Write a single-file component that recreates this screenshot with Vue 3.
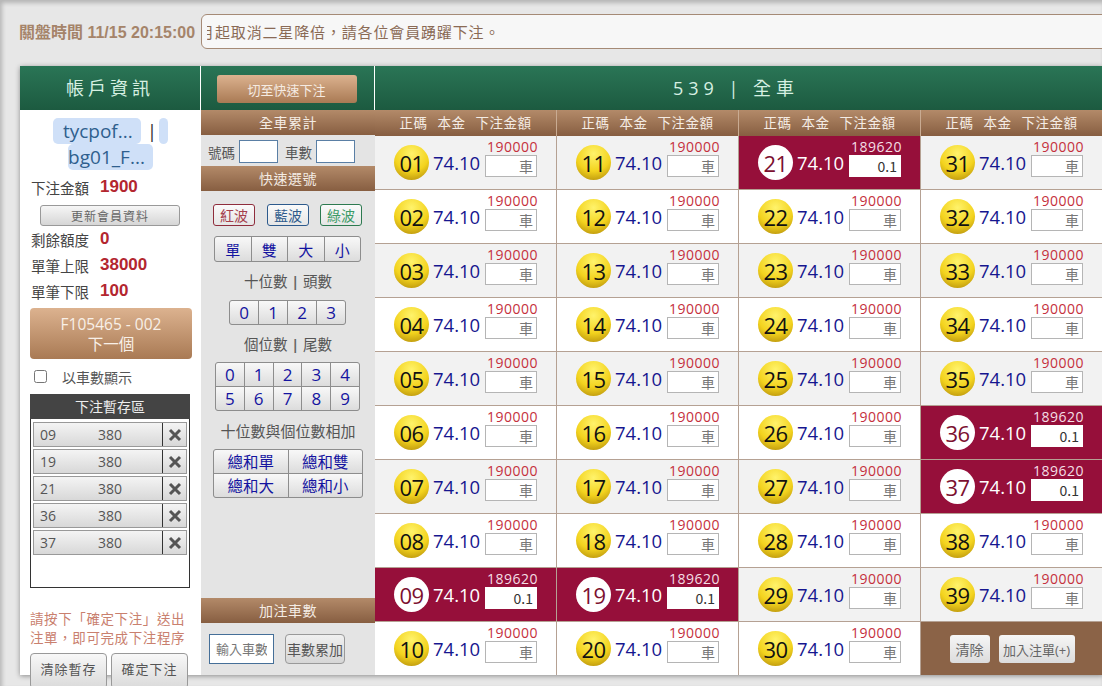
<template>
  <div class="page">
    <div class="top-bar">
      <span class="close-time">關盤時間 11/15 20:15:00</span>
      <div class="notice">
        <div class="notice-clip"><span class="notice-text">月起取消二星降倍，請各位會員踴躍下注。</span></div>
      </div>
    </div>

    <div class="board">
      <aside class="account">
        <h2 class="green-head account-title">帳戶資訊</h2>
        <div class="user">
          <span class="chip">tycpof...</span><span class="bar">|</span><span class="chip chip-empty"></span>
          <span class="chip chip-second">bg01_F...</span>
        </div>
        <p class="stat first"><span>下注金額</span><b>1900</b></p>
        <button class="refresh-btn">更新會員資料</button>
        <p class="stat refresh-after"><span>剩餘額度</span><b>0</b></p>
        <p class="stat"><span>單筆上限</span><b>38000</b></p>
        <p class="stat"><span>單筆下限</span><b>100</b></p>
        <button class="next-btn">F105465 - 002<br />下一個</button>
        <label class="by-count"><input type="checkbox" /><span>以車數顯示</span></label>
        <div class="cart">
          <div class="cart-head">下注暫存區</div>
          <div class="cart-body">
            <div v-for="item in cart" :key="item" class="cart-row">
              <span class="cart-no">{{ item }}</span>
              <span class="cart-amt">380</span>
              <span class="cart-del">
                <svg width="14" height="14" viewBox="0 0 14 14">
                  <path d="M2 2 L12 12 M12 2 L2 12" stroke="#555" stroke-width="3" fill="none" />
                </svg>
              </span>
            </div>
          </div>
        </div>
        <p class="hint">請按下「確定下注」送出<br />注單，即可完成下注程序</p>
        <div class="cart-actions">
          <button>清除暫存</button>
          <button>確定下注</button>
        </div>
      </aside>

      <section class="quick">
        <div class="green-head quick-top"><button class="switch-btn">切至快速下注</button></div>
        <div class="brown-head">全車累計</div>
        <div class="totals">
          <span>號碼</span><input class="small-input" />
          <span class="totals-second">車數</span><input class="small-input" />
        </div>
        <div class="brown-head">快速選號</div>
        <div class="waves">
          <button class="wave red">紅波</button>
          <button class="wave blue">藍波</button>
          <button class="wave green">綠波</button>
        </div>
        <div class="btn-group group-four">
          <button v-for="t in ['單', '雙', '大', '小']" :key="t">{{ t }}</button>
        </div>
        <p class="quick-label">十位數 <i>|</i> 頭數</p>
        <div class="btn-group group-tens">
          <button v-for="t in [0, 1, 2, 3]" :key="t">{{ t }}</button>
        </div>
        <p class="quick-label">個位數 <i>|</i> 尾數</p>
        <div class="btn-group group-units">
          <button v-for="t in 10" :key="t">{{ t - 1 }}</button>
        </div>
        <p class="quick-label sum-label">十位數與個位數相加</p>
        <div class="btn-group group-sum">
          <button v-for="t in ['總和單', '總和雙', '總和大', '總和小']" :key="t">{{ t }}</button>
        </div>
        <div class="brown-head add-head">加注車數</div>
        <div class="add-row">
          <input class="add-input" placeholder="輸入車數" />
          <button class="add-btn">車數累加</button>
        </div>
      </section>

      <section class="numbers">
        <h2 class="green-head numbers-title">539 | 全車</h2>
        <div class="col-heads">
          <div v-for="c in 4" :key="c" class="col-head">
            <span>正碼</span><span>本金</span><span>下注金額</span>
          </div>
        </div>
        <div class="grid">
          <div
            v-for="cell in cells"
            :key="cell.no"
            :class="['cell', { alt: cell.alt, picked: cell.picked }]"
          >
            <span class="ball">{{ cell.no }}</span>
            <span class="rate">74.10</span>
            <div class="stake">
              <span class="limit">{{ cell.picked ? 189620 : 190000 }}</span>
              <input class="stake-input" placeholder="車" :value="cell.picked ? '0.1' : ''" />
            </div>
          </div>
          <div class="cell-actions">
            <button>清除</button>
            <button>加入注單(+)</button>
          </div>
        </div>
      </section>
    </div>
  </div>
</template>

<script setup>
const cart = ['09', '19', '21', '36', '37']
const pickedNumbers = ['09', '19', '21', '36', '37']

const cells = []
for (let i = 1; i <= 39; i++) {
  const no = String(i).padStart(2, '0')
  cells.push({
    no,
    alt: (i - 1) % 10 % 2 === 0,
    picked: pickedNumbers.includes(no)
  })
}
</script>

<style>
html,
body {
  margin: 0;
  overflow: hidden;
}
</style>

<style scoped>
.page {
  width: 1102px;
  height: 686px;
  box-sizing: border-box;
  padding: 14px 0 0 20px;
  overflow: hidden;
  background: #e7e7e7;
  box-shadow: inset 2px 3px 4px rgba(0, 0, 0, 0.22);
  font-family: "Open Sans", "Noto Sans CJK TC", sans-serif;
  color: #444;
}

button {
  font-family: inherit;
  padding: 0;
  cursor: pointer;
}

p,
h2 {
  margin: 0;
  font-weight: normal;
}

.top-bar {
  display: flex;
  align-items: center;
  gap: 6px;
  height: 35px;
}

.close-time {
  margin: -2px 0 0 -1px;
  font-family: "Liberation Sans", "Noto Sans CJK TC", sans-serif;
  font-size: 16px;
  font-weight: bold;
  color: #a5846a;
  white-space: nowrap;
}

.notice {
  flex: 1;
  height: 33px;
  margin-right: -12px;
  padding-left: 5px;
  display: flex;
  align-items: center;
  overflow: hidden;
  background: #f7f7f7;
  border: 1px solid #a58a76;
  border-radius: 6px;
}

.notice-clip {
  flex: 1;
  overflow: hidden;
  white-space: nowrap;
}

.notice-text {
  display: inline-block;
  margin-left: -8px;
  margin-top: -2px;
  font-size: 15px;
  letter-spacing: 0.85px;
  color: #8a6a55;
}

.board {
  display: flex;
  width: 1083px;
  height: 609px;
  margin-top: 17px;
  background: #fff;
  box-shadow: 0 1px 5px rgba(0, 0, 0, 0.4);
}

.green-head {
  height: 44px;
  box-sizing: border-box;
  display: flex;
  align-items: center;
  justify-content: center;
  background: linear-gradient(#2a7556, #1c5a40);
  color: #d6f0e2;
}

.account {
  width: 181px;
  flex-shrink: 0;
  background: #fff;
  font-size: 14.5px;
}

.account-title {
  padding-bottom: 3px;
  border-right: 1px solid #fff;
  font-size: 18px;
  letter-spacing: 4px;
}

.user {
  width: 140px;
  margin: 8px auto 0;
  text-align: center;
  font-size: 19px;
  line-height: 26px;
  color: #2f5f8e;
}

.chip {
  display: inline-block;
  padding: 0 8px 0 10px;
  background: #cfe0f8;
  border-radius: 5px;
}

.chip-empty {
  width: 9px;
  height: 26px;
  padding: 0;
  vertical-align: top;
}

.chip-second {
  padding: 0 8px 0 0;
}

.bar {
  margin: 0 2px 0 6px;
  color: #333;
}

.stat {
  display: flex;
  align-items: center;
  gap: 11px;
  height: 26px;
  padding-left: 11px;
  color: #444;
}

.stat b {
  font-family: "Liberation Sans", sans-serif;
  font-size: 17px;
  color: #b3262f;
}

.stat.first {
  margin-top: 4px;
}

.refresh-btn {
  display: block;
  width: 140px;
  height: 21px;
  margin: 5px 0 0 20px;
  border: 1px solid #999;
  border-radius: 3px;
  background: linear-gradient(#f6f6f6, #d6d6d6);
  font-size: 12px;
  letter-spacing: 1px;
  color: #666;
}

.refresh-after {
  margin-top: 0;
}

.next-btn {
  display: block;
  width: 162px;
  height: 51px;
  margin: 4px 0 0 10px;
  border: 0;
  border-radius: 4px;
  background: linear-gradient(#dcb28f, #a97a54);
  font-size: 15.5px;
  line-height: 20px;
  color: #f8f0e8;
}

.by-count {
  display: flex;
  align-items: center;
  gap: 15px;
  height: 35px;
  padding-left: 14px;
  font-size: 14px;
  color: #555;
}

.by-count input {
  width: 13px;
  height: 13px;
  margin: 0;
}

.cart {
  width: 160px;
  margin-left: 10px;
  font-size: 14px;
}

.cart-head {
  height: 25px;
  line-height: 25px;
  background: #444;
  color: #eee;
  text-align: center;
}

.cart-body {
  height: 169px;
  box-sizing: border-box;
  padding-top: 3px;
  background: #fff;
  border: 1px solid #333;
  border-top: 0;
}

.cart-row {
  display: flex;
  align-items: center;
  height: 25px;
  margin: 0 2px 2px;
  box-sizing: border-box;
  border: 1px solid #999;
  background: linear-gradient(#f4f4f4, #d8d8d8);
  color: #555;
}

.cart-no {
  width: 64px;
  padding-left: 6px;
  box-sizing: border-box;
}

.cart-amt {
  width: 64px;
}

.cart-del {
  flex: 1;
  height: 100%;
  display: flex;
  align-items: center;
  justify-content: center;
  border-left: 1px solid #333;
}

.hint {
  margin: 22px 0 0 10px;
  font-size: 13.5px;
  line-height: 19px;
  letter-spacing: 0.6px;
  color: #c9806e;
  white-space: nowrap;
}

.cart-actions {
  display: flex;
  gap: 4px;
  margin: 5px 0 0 10px;
}

.cart-actions button {
  width: 77px;
  height: 36px;
  padding-bottom: 5px;
  border: 1px solid #999;
  border-radius: 4px;
  background: linear-gradient(#f8f8f8, #dadada);
  font-size: 13px;
  letter-spacing: 1px;
  color: #555;
}

.quick {
  width: 174px;
  flex-shrink: 0;
  display: flex;
  flex-direction: column;
  background: #e4e4e4;
  font-size: 14px;
}

.quick-top {
  flex-shrink: 0;
  padding: 2px 2px 0 0;
  border-right: 1px solid #fff;
}

.switch-btn {
  width: 140px;
  height: 28px;
  border: 0;
  border-radius: 3px;
  background: linear-gradient(#dcb28f, #a97a54);
  font-size: 13px;
  color: #f5ebe2;
}

.brown-head {
  height: 25px;
  flex-shrink: 0;
  line-height: 25px;
  text-align: center;
  background: linear-gradient(#b38a69, #875e41);
  color: #f4ece4;
  letter-spacing: 0.5px;
}

.totals {
  display: flex;
  align-items: center;
  height: 31px;
  padding: 2px 0 0 7px;
  box-sizing: border-box;
  font-size: 13.5px;
  color: #555;
}

.small-input {
  width: 39px;
  height: 23px;
  box-sizing: border-box;
  margin-left: 4px;
  border: 1px solid #5a7fa5;
  background: #fff;
}

.totals-second {
  margin-left: 7px;
}

.waves {
  display: flex;
  gap: 12px;
  margin: 13px 0 0 12px;
}

.wave {
  width: 42px;
  height: 22px;
  border-radius: 3px;
  font-size: 14px;
  background: linear-gradient(#fafafa, #e6e6e6);
}

.wave.red {
  border: 1px solid #8f2d3c;
  color: #a5404c;
}

.wave.blue {
  border: 1px solid #2d5a8c;
  color: #2d5a8c;
  margin-right: -1px;
}

.wave.green {
  border: 1px solid #2d7a50;
  color: #3b9a66;
}

.btn-group {
  display: grid;
  overflow: hidden;
  box-sizing: border-box;
  border: 1px solid #8d8d8d;
  border-radius: 3px;
  gap: 1px;
  background: #8d8d8d;
}

.btn-group button {
  border: 0;
  background: linear-gradient(#f8f8f8, #dcdcdc);
  color: #1414a0;
}

.group-four {
  grid-template-columns: repeat(4, 1fr);
  width: 147px;
  height: 26px;
  margin: 10px 0 0 13px;
}

.group-tens {
  grid-template-columns: repeat(4, 1fr);
  width: 117px;
  height: 25px;
  margin: 7px 0 0 28px;
}

.group-units {
  grid-template-columns: repeat(5, 1fr);
  grid-auto-rows: 1fr;
  width: 145px;
  height: 49px;
  margin: 6px 0 0 14px;
}

.group-sum {
  grid-template-columns: repeat(2, 1fr);
  grid-auto-rows: 1fr;
  width: 150px;
  height: 49px;
  margin: 7px 0 0 12px;
}

.btn-group.group-tens button,
.btn-group.group-units button {
  font-size: 17px;
}

.btn-group.group-four button {
  font-size: 15px;
}

.btn-group.group-sum button {
  font-size: 15.5px;
}

.quick-label {
  margin-top: 9px;
  height: 22px;
  line-height: 22px;
  text-align: center;
  font-size: 14.5px;
  white-space: nowrap;
  color: #555;
}

.sum-label {
  font-size: 15px;
}

.quick-label i {
  font-style: normal;
  color: #666;
  font-weight: bold;
}

.add-head {
  margin-top: auto;
}

.add-row {
  display: flex;
  gap: 11px;
  height: 52px;
  padding: 11px 0 0 8px;
  box-sizing: border-box;
}

.add-input {
  width: 65px;
  height: 30px;
  box-sizing: border-box;
  padding: 0 6px;
  border: 1px solid #456f98;
  background: #fff;
  font-family: inherit;
  font-size: 13px;
}

.add-input::placeholder {
  color: #777;
}

.add-btn {
  width: 60px;
  height: 30px;
  border: 1px solid #999;
  border-radius: 4px;
  background: linear-gradient(#f0f0f0, #d6d6d6);
  font-size: 14px;
  color: #555;
  white-space: nowrap;
}

.numbers {
  flex: 1;
  min-width: 0;
  display: flex;
  flex-direction: column;
}

.numbers-title {
  flex-shrink: 0;
  padding: 0 6px 3px 0;
  font-size: 18px;
  letter-spacing: 5px;
  white-space: pre;
}

.col-heads {
  display: grid;
  grid-template-columns: repeat(4, 182px);
  height: 26px;
  flex-shrink: 0;
  background: linear-gradient(#b38a69, #875e41);
}

.col-head {
  display: flex;
  align-items: center;
  justify-content: center;
  gap: 10px;
  box-sizing: border-box;
  padding-bottom: 2px;
  border-right: 1px solid #c9ab92;
  font-size: 13.5px;
  letter-spacing: 0.5px;
  color: #f4ece4;
}

.grid {
  flex: 1;
  display: grid;
  grid-template-columns: repeat(4, 182px);
  grid-template-rows: repeat(10, 54px);
  grid-auto-flow: column;
  overflow: hidden;
}

.cell {
  display: flex;
  align-items: center;
  box-sizing: border-box;
  padding-left: 19px;
  background: #fff;
  border-right: 1px solid #b5a193;
  border-bottom: 1px solid #b5a193;
}

.cell.alt {
  background: #f2f2f2;
}

.cell.picked {
  background: #960f3a;
}

.ball {
  width: 35px;
  height: 35px;
  flex-shrink: 0;
  display: flex;
  align-items: center;
  justify-content: center;
  border-radius: 50%;
  background: radial-gradient(circle at 50% 25%, #fff36b 0, #f3d31e 55%, #a98208 100%);
  font-size: 22px;
  letter-spacing: -0.5px;
  color: #111;
}

.picked .ball {
  background: #fff;
  color: #7c1030;
}

.rate {
  width: 52px;
  flex-shrink: 0;
  box-sizing: border-box;
  padding-left: 4px;
  font-size: 18.5px;
  color: #16168f;
}

.picked .rate {
  color: #fff;
}

.stake {
  display: flex;
  flex-direction: column;
  align-items: flex-end;
  align-self: flex-start;
  width: 53px;
  margin-left: 4px;
  padding-top: 3px;
}

.limit {
  height: 15px;
  line-height: 15px;
  font-size: 14px;
  letter-spacing: 0.5px;
  color: #c5303c;
}

.picked .limit {
  color: #f4dfe5;
}

.stake-input {
  width: 52px;
  height: 22px;
  box-sizing: border-box;
  margin: 1px 1px 0 0;
  padding: 0 3px;
  border: 1px solid #b5b5b5;
  background: #fff;
  font-family: "Noto Sans CJK TC", sans-serif;
  font-size: 14px;
  text-align: right;
  color: #333;
}

.stake-input::placeholder {
  color: #777;
}

.picked .stake-input {
  border-color: #fff;
}

.cell-actions {
  display: flex;
  align-items: center;
  justify-content: center;
  gap: 9px;
  background: #8b6347;
}

.cell-actions button {
  height: 28px;
  border: 0;
  border-radius: 3px;
  background: linear-gradient(#f6f6f6, #dcdcdc);
  font-size: 13px;
  color: #666;
}

.cell-actions button:first-child {
  width: 40px;
  font-size: 14px;
}

.cell-actions button:last-child {
  width: 76px;
}
</style>
